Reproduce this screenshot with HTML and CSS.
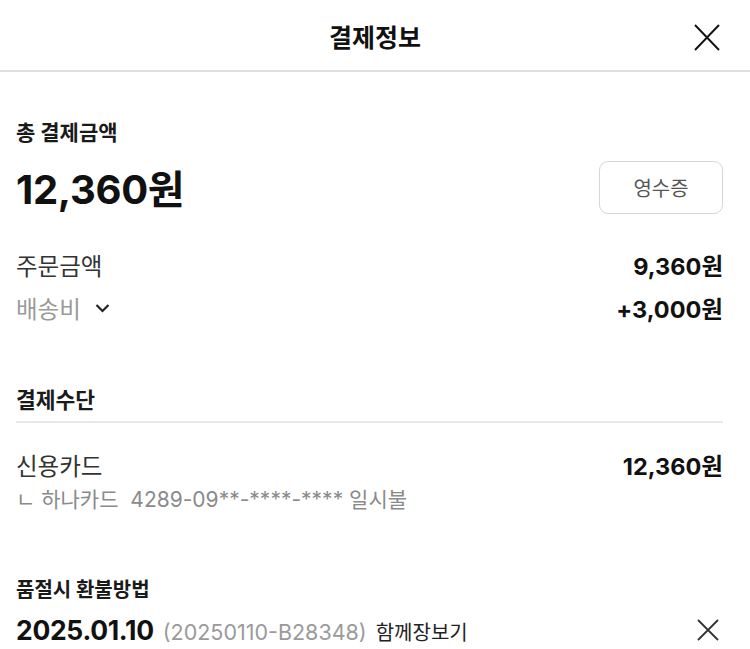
FILE: index.html
```html
<!DOCTYPE html>
<html lang="ko">
<head>
<meta charset="utf-8">
<link rel="stylesheet" href="styles.css">
</head>
<body>
<header class="header">
  <h1 class="title">결제정보</h1>
  <button class="close" aria-label="닫기">
    <svg width="26" height="27" viewBox="0 0 26 27"><path d="M1 1L25 26M25 1L1 26" stroke="#111" stroke-width="1.9" fill="none"/></svg>
  </button>
</header>
<main class="content">
  <section class="total">
    <div class="label-bold">총 결제금액</div>
    <div class="total-row">
      <div class="total-amount">12,360원</div>
      <button class="receipt">영수증</button>
    </div>
    <div class="row first">
      <span class="row-label">주문금액</span>
      <span class="row-value">9,360원</span>
    </div>
    <div class="row">
      <span class="row-label muted">배송비
        <svg class="chev" width="15" height="10" viewBox="0 0 15 10"><path d="M1.5 2L7.5 8L13.5 2" stroke="#222" stroke-width="2.2" fill="none"/></svg>
      </span>
      <span class="row-value">+3,000원</span>
    </div>
  </section>
  <section class="method">
    <div class="label-bold section-head">결제수단</div>
    <div class="row">
      <span class="row-label">신용카드</span>
      <span class="row-value">12,360원</span>
    </div>
    <div class="card-info">ㄴ 하나카드&nbsp; 4289-09**-****-**** 일시불</div>
  </section>
  <section class="refund">
    <div class="label-bold">품절시 환불방법</div>
    <div class="order-row">
      <div class="order-info">
        <span class="order-date">2025.01.10</span>
        <span class="order-no">(20250110-B28348)</span>
        <span class="order-shop">함께장보기</span>
      </div>
      <svg width="22" height="22" viewBox="0 0 22 22"><path d="M1 1L21 21M21 1L1 21" stroke="#333" stroke-width="1.8" fill="none"/></svg>
    </div>
  </section>
</main>
</body>
</html>
```
FILE: styles.css
```css
* { box-sizing: border-box; }
html, body {
  margin: 0;
  padding: 0;
  background: #fff;
  font-family: Inter, "Noto Sans CJK KR", sans-serif;
  color: #111;
}
.header {
  height: 72px;
  border-bottom: 2px solid #dde0e5;
  display: flex;
  align-items: center;
  justify-content: center;
  position: relative;
}
.title {
  margin: 0;
  font-size: 25px;
  font-weight: 700;
  color: #111;
  line-height: 32px;
  margin-top: 6px;
}
.close {
  position: absolute;
  right: 30px;
  top: 24px;
  width: 26px;
  height: 27px;
  padding: 0;
  border: 0;
  background: none;
  display: flex;
}
.content {
  padding: 0 27px 0 16px;
}
.total {
  padding-top: 47px;
}
.label-bold {
  font-size: 20px;
  font-weight: 700;
  color: #1a1a1a;
  line-height: 28px;
}
.total .label-bold { font-size: 21px; }
.total-row {
  display: flex;
  justify-content: space-between;
  align-items: flex-start;
  margin-top: 14px;
}
.total-amount {
  font-size: 40px;
  font-weight: 700;
  line-height: 48px;
  margin-top: 5px;
  letter-spacing: -0.3px;
  color: #111;
}
.receipt {
  width: 124px;
  height: 53px;
  border: 1px solid #d6d6d6;
  border-radius: 9px;
  background: #fff;
  font-family: inherit;
  font-size: 20px;
  color: #555;
  padding: 0;
}
.row {
  display: flex;
  justify-content: space-between;
  align-items: center;
  height: 43px;
}
.row.first { margin-top: 29px; }
.row-label {
  font-size: 23.5px;
  color: #333;
  display: flex;
  align-items: center;
  gap: 14px;
}
.row-label.muted { color: #9a9a9a; }
.row-value {
  font-size: 23.5px;
  font-weight: 700;
  color: #111;
}
.method {
  margin-top: 57px;
}
.section-head {
  font-size: 21.5px;
  padding-bottom: 7px;
  border-bottom: 2px solid #e8e8e8;
}
.method .row { margin-top: 20px; }
.card-info {
  font-size: 21px;
  color: #8a8a8a;
  line-height: 28px;
}
.refund {
  margin-top: 62px;
}
.order-row {
  display: flex;
  justify-content: space-between;
  align-items: center;
  height: 32px;
  margin-top: 10px;
  padding-right: 4px;
}
.order-info {
  display: flex;
  align-items: baseline;
  gap: 9px;
}
.order-date {
  font-size: 26.5px;
  font-weight: 700;
  color: #111;
  letter-spacing: -0.3px;
}
.order-no {
  font-size: 21.5px;
  color: #9a9a9a;
}
.order-shop {
  font-size: 20px;
  color: #222;
}
```
